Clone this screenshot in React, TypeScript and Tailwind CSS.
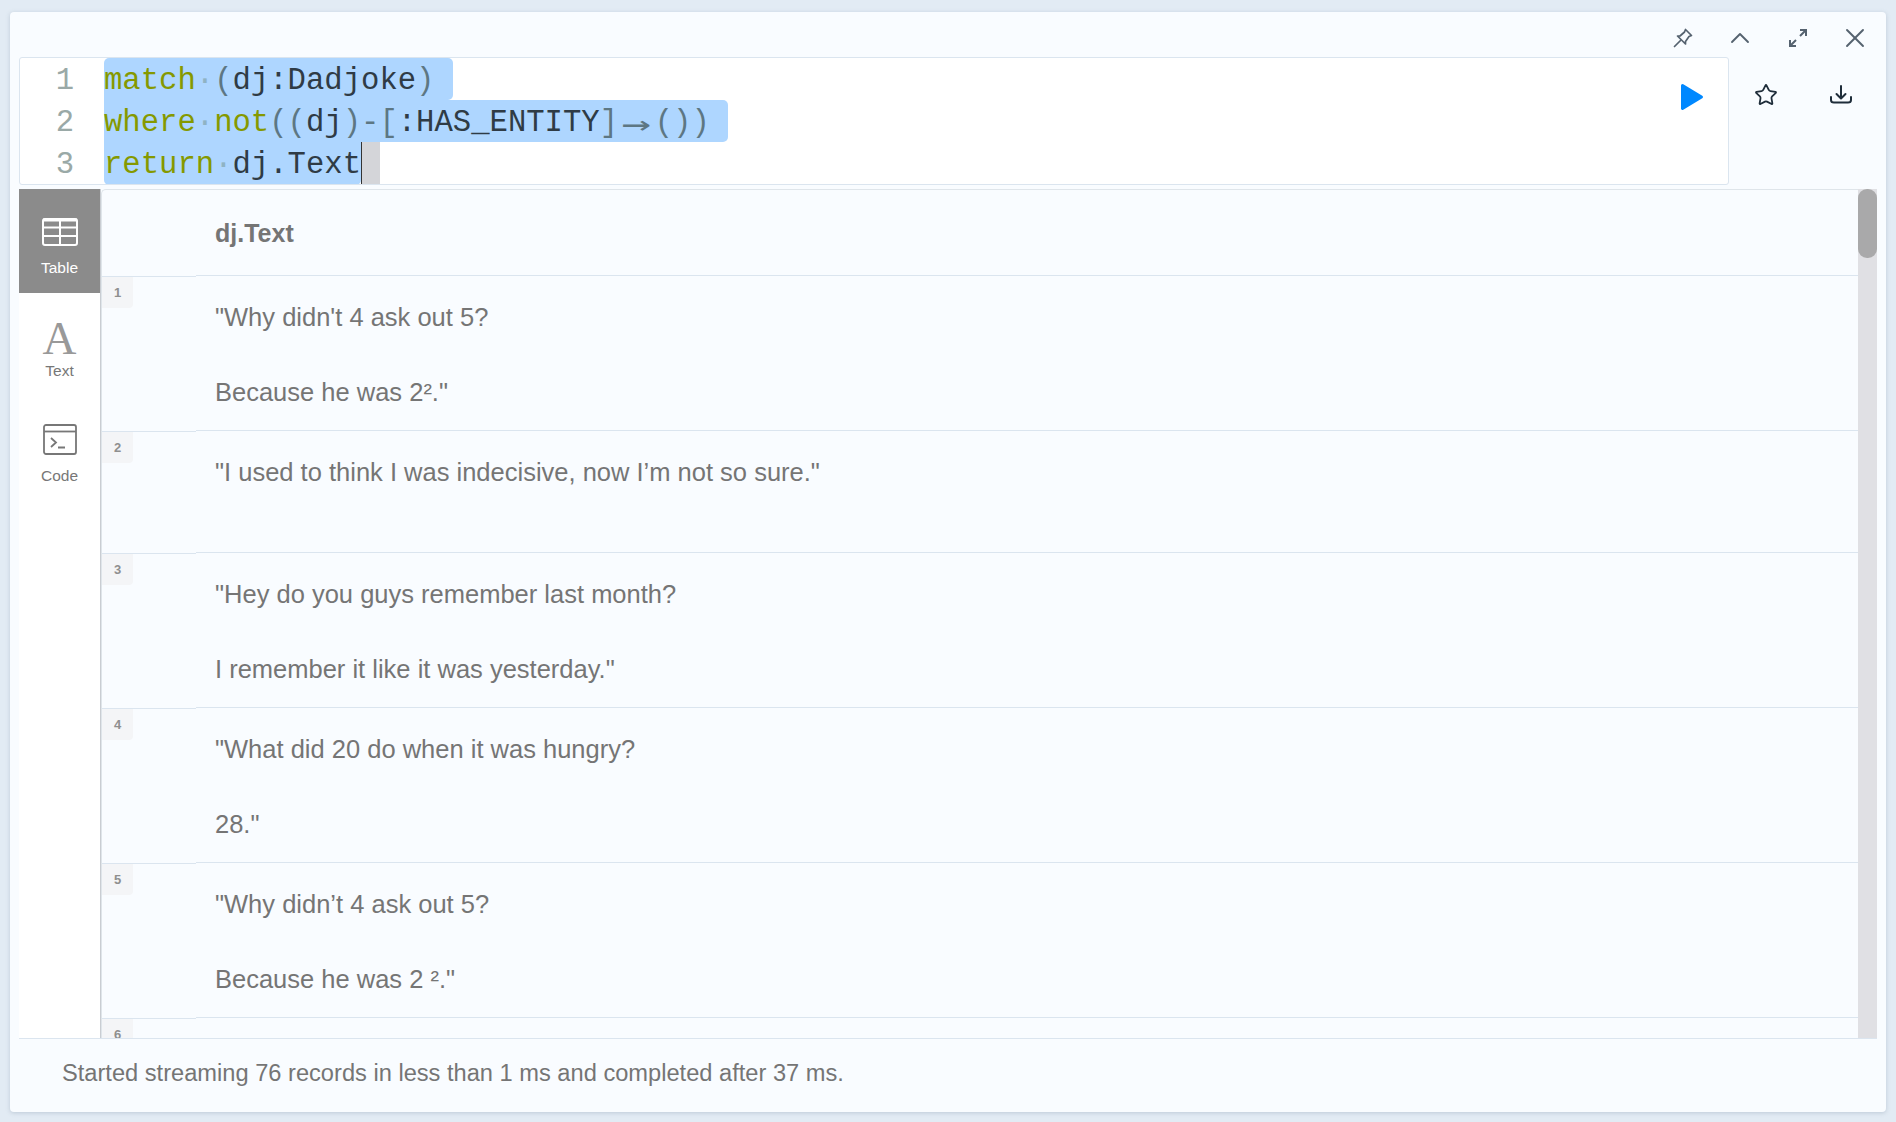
import { Star, X, ChevronUp } from "lucide-react";

const rows = [
  { n: 1, h: "h-[155px]", text: "\"Why didn't 4 ask out 5?\n\nBecause he was 2².\"" },
  { n: 2, h: "h-[122px]", text: "\"I used to think I was indecisive, now I’m not so sure.\"" },
  { n: 3, h: "h-[155px]", text: "\"Hey do you guys remember last month?\n\nI remember it like it was yesterday.\"" },
  { n: 4, h: "h-[155px]", text: "\"What did 20 do when it was hungry?\n\n28.\"" },
  { n: 5, h: "h-[155px]", text: "\"Why didn’t 4 ask out 5?\n\nBecause he was 2 ².\"" },
  { n: 6, h: "h-[155px]", text: "" },
];

function Dot() {
  return <span className="text-[#8fb3c4]">·</span>;
}

function Gutter({ n }: { n: number }) {
  return <span className="w-[84px] shrink-0 pt-[3px] pr-[30px] text-right text-[#9aa9a7]">{n}</span>;
}

function Paren({ children }: { children: string }) {
  return <span className="text-[#5d7783]">{children}</span>;
}

function Editor() {
  return (
    <div className="relative h-[128px] w-[1710px] shrink-0 overflow-hidden rounded-[3px] border border-[#dbe5ef] bg-white font-['Liberation_Mono',monospace] text-[30.6px] leading-[41.6px] text-[#2f3b45]">
      <div className="flex h-[42px]">
        <Gutter n={1} />
        <span className="rounded-t-[5px] rounded-br-[5px] bg-[#aed6ff] pt-[3px] pr-[1ch]">
          <span className="text-[#859900]">match</span>
          <Dot />
          <Paren>(</Paren>dj:Dadjoke<Paren>)</Paren>
        </span>
      </div>
      <div className="flex h-[42px]">
        <Gutter n={2} />
        <span className="rounded-r-[5px] bg-[#aed6ff] pt-[3px] pr-[1ch]">
          <span className="text-[#859900]">where</span>
          <Dot />
          <span className="text-[#859900]">not</span>
          <Paren>((</Paren>dj<Paren>)-[</Paren>:HAS_ENTITY<Paren>]</Paren>
          <span className="inline-block h-[41.6px] w-[36.7px] scale-x-[1.6] text-center align-top font-['DejaVu_Sans_Mono',monospace] text-[#5d7783]">→</span>
          <Paren>())</Paren>
        </span>
      </div>
      <div className="flex h-[43px]">
        <Gutter n={3} />
        <span className="rounded-b-[5px] bg-[#aed6ff] pt-[3px]">
          <span className="text-[#859900]">return</span>
          <Dot />
          dj.Text
        </span>
        <span className="w-[19px] border-l border-[#333] bg-[#d4d5d9]" />
      </div>
      <button className="absolute left-[1660px] top-[25px] text-[#0088ff]">
        <svg width="24" height="28" viewBox="0 0 24 28" fill="currentColor" stroke="currentColor" strokeWidth="3" strokeLinejoin="round">
          <path d="M2.5 2.5 L21.5 14 L2.5 25.5 Z" />
        </svg>
      </button>
    </div>
  );
}

function TopIcons() {
  return (
    <div className="flex h-[45px] shrink-0 items-center justify-end gap-[25.5px] pr-[15px] pt-[7px] text-[#55626f]">
      <svg width="32" height="32" viewBox="-3 -3 32 32" fill="none" stroke="currentColor" strokeWidth="1.7" strokeLinejoin="round" strokeLinecap="round">
        <path d="M15.5 4.5 L21.5 10.5 L19 11.5 L15.5 16.5 L15.5 19 L7.5 11 L10 11 L14.5 7 Z" />
        <path d="M10.5 15.5 L4.5 21.5" />
      </svg>
      <ChevronUp size={32} strokeWidth={1.4} />
      <svg width="32" height="32" viewBox="-3 -3 32 32" fill="none" stroke="currentColor" strokeWidth="2">
        <path d="M15 11 L20.5 5.5 M15 5 H21 V11" />
        <path d="M11 15 L5.5 20.5 M5 15 V21 H11" />
      </svg>
      <X size={32} strokeWidth={1.4} />
    </div>
  );
}

function SideTabs() {
  return (
    <div className="flex w-[82px] shrink-0 flex-col border-r border-[#c9cdd2] bg-white font-['Liberation_Sans',sans-serif] text-[15.5px] text-[#777]">
      <div className="flex h-[104px] flex-col items-center bg-[#8b8b8b] pt-[29px] text-white">
        <svg width="36" height="28" viewBox="0 0 36 28" fill="none" stroke="currentColor" strokeWidth="2">
          <rect x="1" y="1" width="34" height="26" rx="2" />
          <path d="M1 9.5 H35 M1 18 H35 M18 1 V27" />
          <path d="M1 2 H35" strokeWidth="3" />
        </svg>
        <span className="mt-[10px]">Table</span>
      </div>
      <div className="flex h-[126px] flex-col items-center pt-[26px]">
        <span className="font-['Liberation_Serif',serif] text-[47px] leading-[38px] text-[#999]">A</span>
        <span className="mt-[2px]">Text</span>
      </div>
      <div className="flex flex-col items-center pt-[4px]">
        <svg width="36" height="34" viewBox="0 0 36 34" fill="none" stroke="currentColor" strokeWidth="1.8">
          <rect x="2" y="2" width="32" height="29" rx="2" />
          <path d="M2 8.5 H34" />
          <path d="M9 15 L14 19.5 L9 24 M16 24.5 H23" />
        </svg>
        <span className="mt-[7px]">Code</span>
      </div>
    </div>
  );
}

function Results() {
  return (
    <div className="min-w-0 flex-1 overflow-hidden rounded-tl-[5px] border-l border-t border-[#dfe5ea] font-['Liberation_Sans',sans-serif] text-[25.5px] leading-[37.5px] text-[#757575]">
      <div className="flex h-[85px] items-center pl-[113px] pt-[2px] text-[25px] font-bold">dj.Text</div>
      {rows.map((row) => (
        <div key={row.n} className={`flex ${row.h}`}>
          <div className="mt-px w-[94px] shrink-0 border-t border-[#dbe5ef]">
            <div className="flex h-[31px] w-[31px] items-center justify-center rounded-br-[4px] bg-[#f4f5f7] text-[13px] leading-none font-bold text-[#8f8f8f]">
              {row.n}
            </div>
          </div>
          <div className="flex-1 whitespace-pre-line border-t border-[#dbe5ef] pl-[19px] pt-[22.5px]">{row.text}</div>
        </div>
      ))}
    </div>
  );
}

function Scrollbar() {
  return (
    <div className="w-[19px] shrink-0 bg-[#e0e0e4]">
      <div className="h-[69px] rounded-[9px] bg-[#a9a9aa]" />
    </div>
  );
}

export default function App() {
  return (
    <div className="h-[1122px] w-[1896px] overflow-hidden bg-[#e2ebf4] px-[10px] pt-[12px]">
      <div className="flex h-[1100px] w-[1876px] flex-col rounded-[4px] bg-[#f9fcff] shadow-[0_1px_4px_rgba(120,140,160,0.35)]">
        <TopIcons />
        <div className="flex h-[132px] shrink-0 pl-[9px]">
          <Editor />
          <div className="flex h-[76px] flex-1 items-center justify-between pl-[22px] pr-[33px] text-[#1f2d3a]">
            <Star size={24} strokeWidth={1.8} className="ml-[3px]" />
            <svg width="24" height="24" viewBox="0 0 24 24" fill="none" stroke="currentColor" strokeWidth="2" strokeLinecap="round" strokeLinejoin="round">
              <path d="M12 3 V15 M7.5 11 L12 15.5 L16.5 11" />
              <path d="M2 14 V17 Q2 19.5 5 19.5 H19 Q22 19.5 22 17 V14" />
            </svg>
          </div>
        </div>
        <div className="mx-[9px] flex h-[850px] shrink-0 overflow-hidden border-b border-[#dbe5ef]">
          <SideTabs />
          <Results />
          <Scrollbar />
        </div>
        <div className="flex-1 pl-[52px] pt-[16px] font-['Liberation_Sans',sans-serif] text-[23.65px] leading-[37.5px] text-[#757575]">
          Started streaming 76 records in less than 1 ms and completed after 37 ms.
        </div>
      </div>
    </div>
  );
}
